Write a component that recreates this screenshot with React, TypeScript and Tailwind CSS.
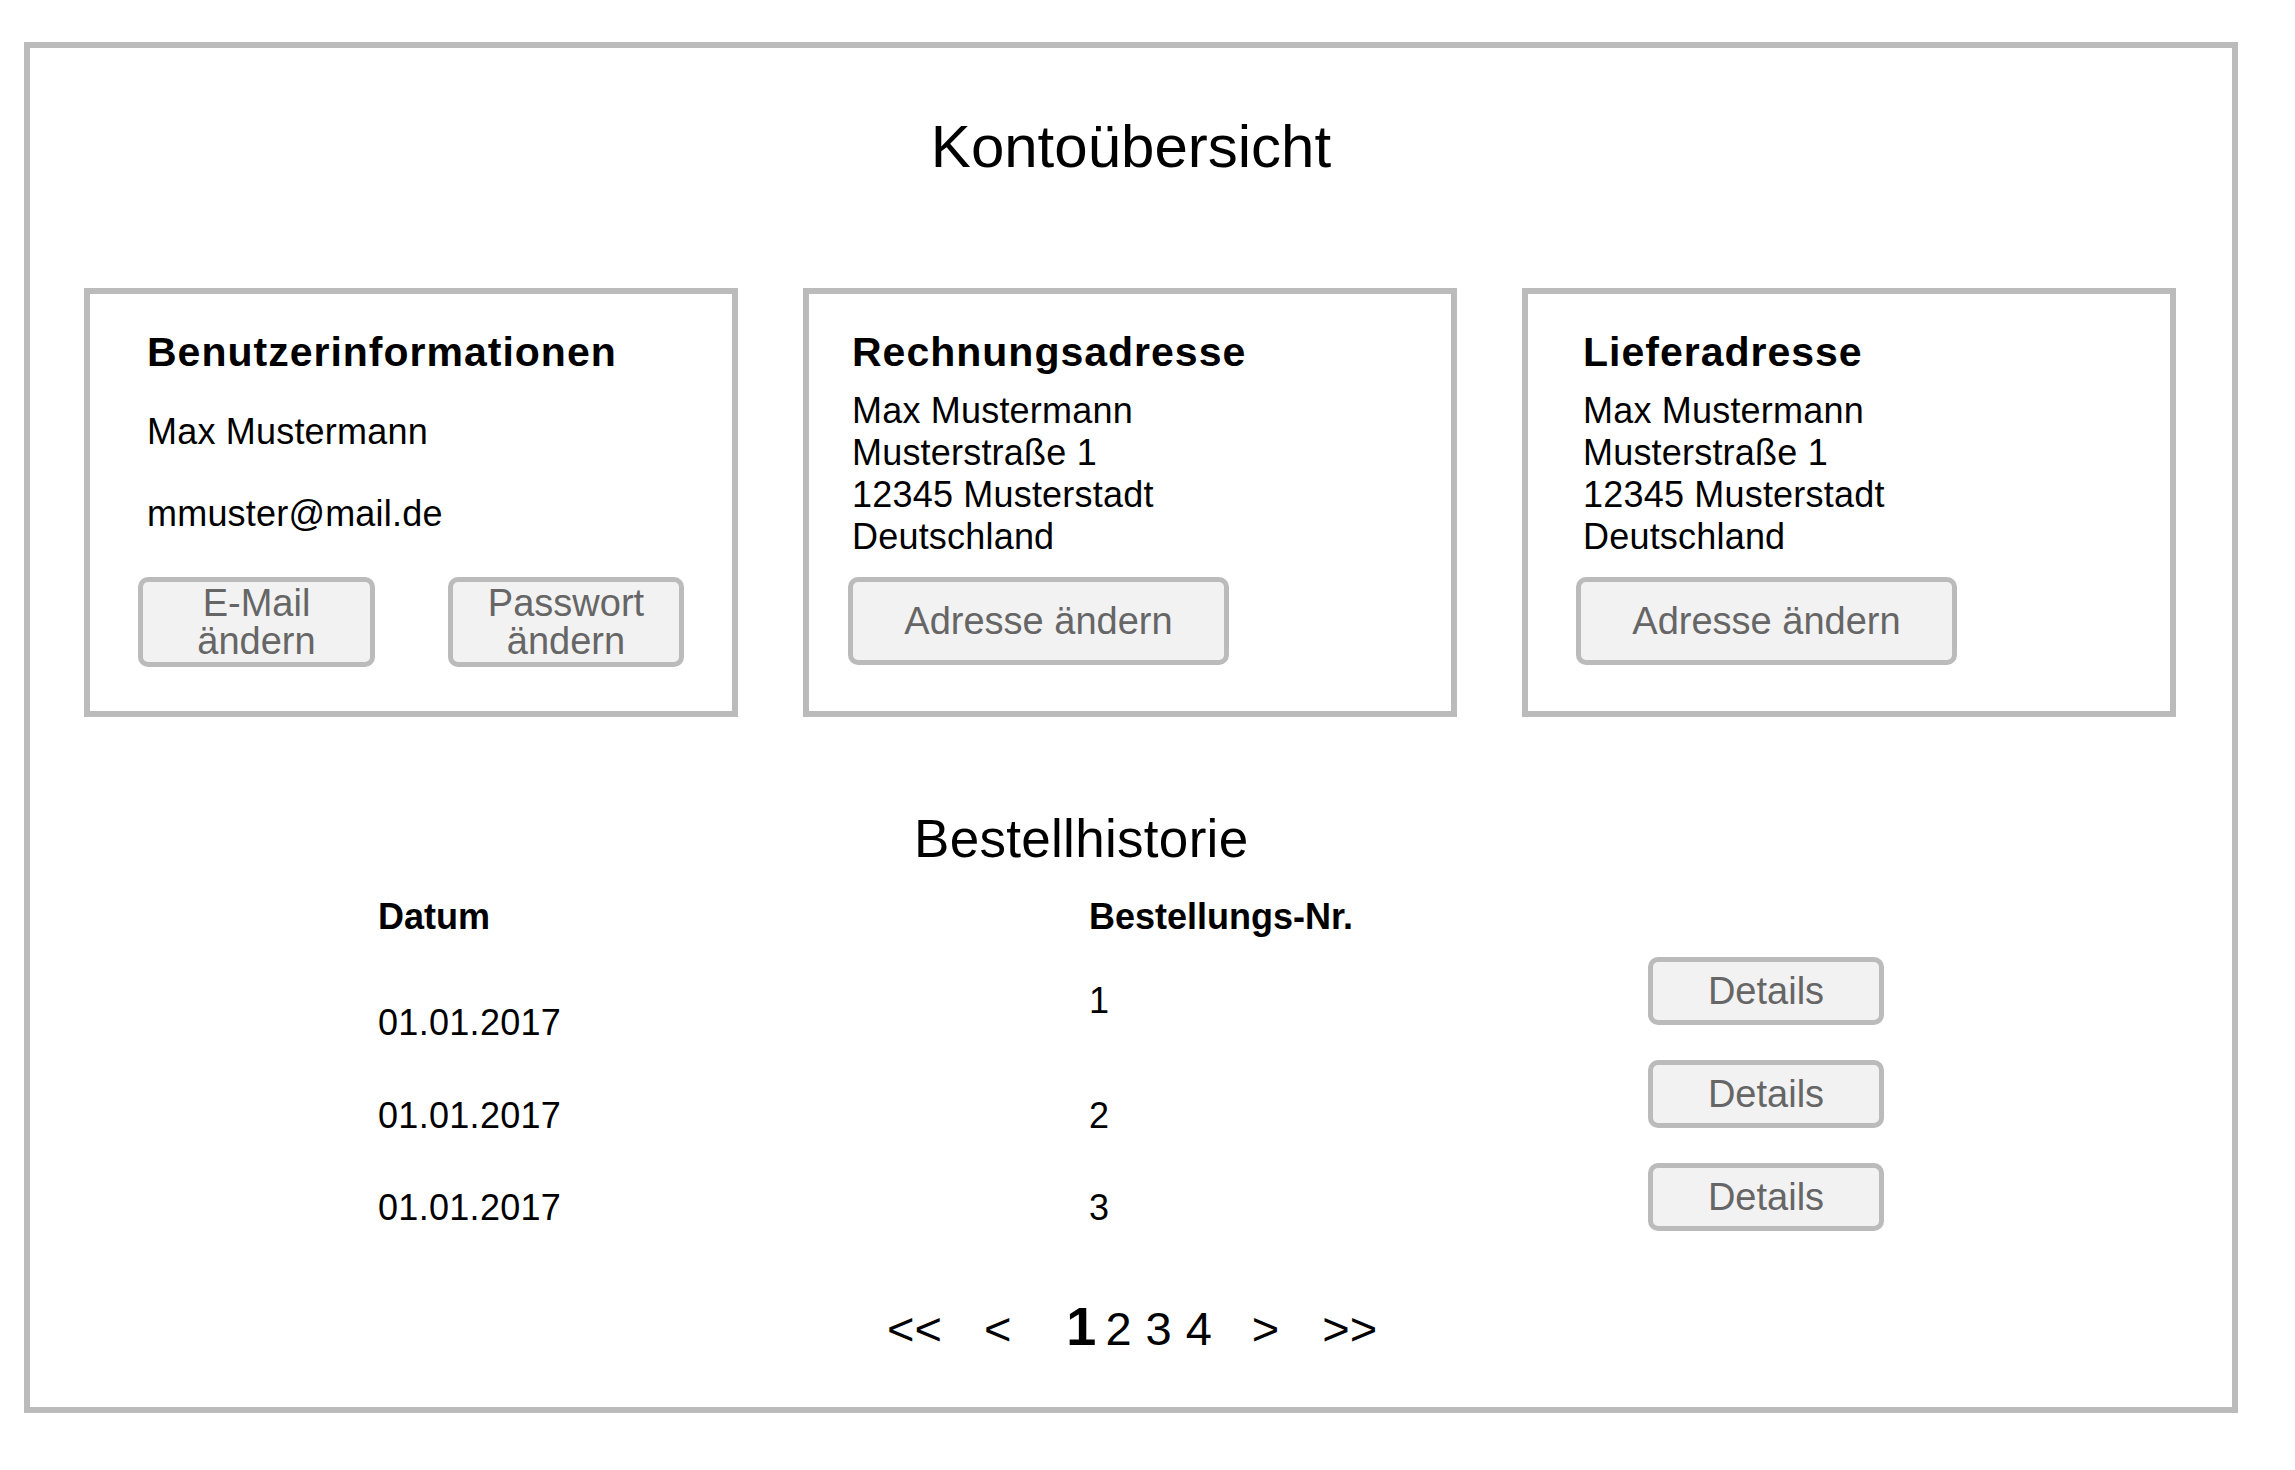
import type { ReactNode } from "react";

const FONT = { fontFamily: '"Liberation Sans", Arial, sans-serif' };

function GrayButton({ className, children }: { className: string; children: ReactNode }) {
  return (
    <button
      type="button"
      className={`flex items-center justify-center rounded-[10px] border-[5px] border-[#bbbbbb] bg-[#f2f2f2] text-center text-[38px] leading-[38px] text-[#666666] ${className}`}
    >
      {children}
    </button>
  );
}

const ADDRESS = ["Max Mustermann", "Musterstraße 1", "12345 Musterstadt", "Deutschland"];

function AddressCard({ title, padX, textShift }: { title: string; padX: string; textShift: string }) {
  return (
    <section className={`flex h-[429px] w-[654px] flex-col border-[6px] border-[#bbbbbb] bg-white pt-[38px] ${padX}`}>
      <h2 className={`text-[41px] font-bold leading-none tracking-[1px] ${textShift}`}>{title}</h2>
      <div className={`mt-[17px] text-[36px] leading-[42px] tracking-[0.2px] ${textShift}`}>
        {ADDRESS.map((line) => (
          <p key={line}>{line}</p>
        ))}
      </div>
      <GrayButton className="mt-[19px] h-[88px] w-[381px]">Adresse ändern</GrayButton>
    </section>
  );
}

const ORDERS = [
  { date: "01.01.2017", nr: "1" },
  { date: "01.01.2017", nr: "2" },
  { date: "01.01.2017", nr: "3" },
];

export default function App() {
  return (
    <div className="h-[1470px] w-[2295px] bg-white pl-[24px] pt-[42px] text-black" style={FONT}>
      <div className="flex h-[1371px] w-[2214px] flex-col border-[6px] border-[#bbbbbb]">
        <h1 className="pt-[69px] text-center text-[60px] leading-none">Kontoübersicht</h1>

        <div className="mt-[111px] flex gap-[65px] pl-[54px]">
          <section className="flex h-[429px] w-[654px] flex-col border-[6px] border-[#bbbbbb] bg-white px-[48px] pt-[38px]">
            <h2 className="ml-[9px] text-[41px] font-bold leading-none tracking-[1px]">Benutzerinformationen</h2>
            <p className="ml-[9px] mt-[41px] text-[36px] leading-none tracking-[0.2px]">Max Mustermann</p>
            <p className="ml-[9px] mt-[46px] text-[36px] leading-none tracking-[0.2px]">mmuster@mail.de</p>
            <div className="mt-[45px] flex justify-between">
              <GrayButton className="h-[90px] w-[237px] flex-col">
                <span>E-Mail</span>
                <span>ändern</span>
              </GrayButton>
              <GrayButton className="h-[90px] w-[236px] flex-col">
                <span>Passwort</span>
                <span>ändern</span>
              </GrayButton>
            </div>
          </section>
          <AddressCard title="Rechnungsadresse" padX="px-[39px]" textShift="ml-[4px]" />
          <AddressCard title="Lieferadresse" padX="px-[48px]" textShift="ml-[7px]" />
        </div>

        <h2 className="ml-[884px] mt-[95px] text-[53px] leading-none tracking-[0.3px]">Bestellhistorie</h2>

        <div className="ml-[348px] mt-[34px] flex items-start">
          <div className="flex w-[711px] flex-col text-[36px] leading-none">
            <span className="font-bold">Datum</span>
            <span className="mt-[70px] tracking-[0.3px]">{ORDERS[0].date}</span>
            <span className="mt-[57px] tracking-[0.3px]">{ORDERS[1].date}</span>
            <span className="mt-[56px] tracking-[0.3px]">{ORDERS[2].date}</span>
          </div>
          <div className="flex w-[559px] flex-col text-[36px] leading-none">
            <span className="font-bold">Bestellungs-Nr.</span>
            <span className="mt-[48px]">{ORDERS[0].nr}</span>
            <span className="mt-[79px]">{ORDERS[1].nr}</span>
            <span className="mt-[56px]">{ORDERS[2].nr}</span>
          </div>
          <div className="flex flex-col pt-[58px]">
            {ORDERS.map((o, i) => (
              <GrayButton key={o.nr} className={`h-[68px] w-[236px] ${i > 0 ? "mt-[35px]" : ""}`}>
                Details
              </GrayButton>
            ))}
          </div>
        </div>

        <nav className="ml-[857px] mt-[68px] flex items-baseline text-[47px] leading-none">
          <span>&lt;&lt;</span>
          <span className="ml-[42px]">&lt;</span>
          <span className="ml-[55px] text-[54px] font-bold">1</span>
          <span className="ml-[9px]">2</span>
          <span className="ml-[14px]">3</span>
          <span className="ml-[14px]">4</span>
          <span className="ml-[40px]">&gt;</span>
          <span className="ml-[43px]">&gt;&gt;</span>
        </nav>
      </div>
    </div>
  );
}
